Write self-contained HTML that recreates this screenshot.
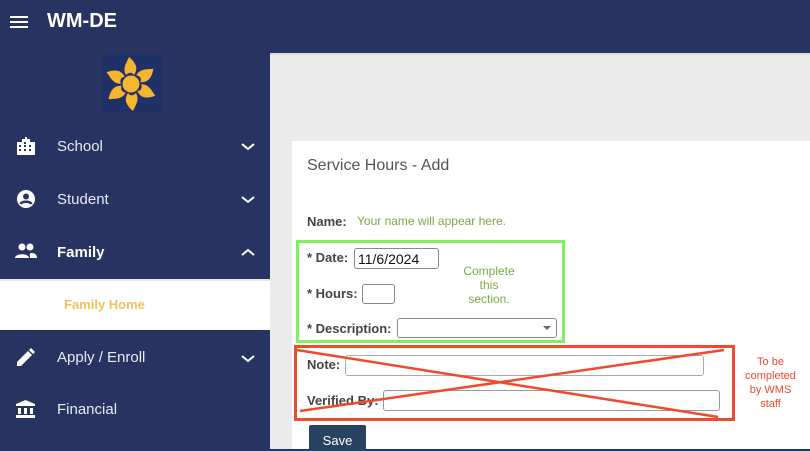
<!DOCTYPE html>
<html><head><meta charset="utf-8"><style>
*{margin:0;padding:0;box-sizing:border-box}
body{width:810px;height:449px;overflow:hidden;background:#273461;font-family:"Liberation Sans",sans-serif;position:relative}
.abs{position:absolute}
.hdr{left:0;top:0;width:810px;height:53px;background:#273461}
.main{left:270px;top:53px;width:540px;height:396px;background:#ebebeb;border-top:2px solid #d9dbe2}
.card{left:292px;top:141px;width:518px;height:308px;background:#fff}
.mi{color:#e9ebf2;font-size:15px}
.lbl{font-weight:bold;color:#444;font-size:13px}
.inp{border:1px solid #888;border-radius:3px;background:#fff}
</style></head><body>
<div class="abs hdr"></div>
<div class="abs" style="left:10px;top:16px;width:18px;height:2px;background:#fff;box-shadow:0 5px 0 #fff,0 10px 0 #fff"></div>
<div class="abs" style="left:47px;top:10px;color:#fff;font-weight:bold;font-size:20px">WM-DE</div>
<svg class="abs" style="left:102px;top:54px" width="60" height="58" viewBox="0 0 60 58">
<rect width="60" height="58" fill="#1f3166"/>
<g fill="#f6b531" transform="translate(29,30)">
<circle r="8.5"/>
<g id="p"><path d="M-5,-9 C-9,-16 -4,-22 -2,-27 C4,-22 8,-16 3,-9 C1,-12 -2,-12 -5,-9Z"/></g>
<use href="#p" transform="rotate(60)"/><use href="#p" transform="rotate(120)"/><use href="#p" transform="rotate(180)"/><use href="#p" transform="rotate(240)"/><use href="#p" transform="rotate(300)"/>
</g></svg>
<svg class="abs" style="left:17px;top:137px" width="18" height="18" viewBox="0 0 18 18" fill="#fff"><path d="M0 18V5h5V2h3V0h2v2h3v3h5v13zM2 8h2v2H2zm0 4h2v2H2zm5-7h2v2H7zm0 3h2v2H7zm0 4h2v2H7zm5-4h2v2h-2zm0 4h2v2h-2z" fill-rule="evenodd"/></svg>
<div class="abs mi" style="left:57px;top:138px">School</div>
<svg class="abs" style="left:17px;top:190px" width="18" height="18" viewBox="0 0 18 18"><circle cx="9" cy="9" r="9" fill="#fff"/><circle cx="9" cy="6.5" r="3" fill="#273461"/><path d="M3.5 14c1.5-3 9.5-3 11 0" stroke="#273461" stroke-width="2.5" fill="none"/></svg>
<div class="abs mi" style="left:57px;top:191px">Student</div>
<svg class="abs" style="left:15px;top:243px" width="22" height="16" viewBox="0 0 22 16" fill="#fff"><circle cx="7" cy="4" r="3.5"/><circle cx="15" cy="4" r="3.5"/><path d="M0 15c0-5 14-5 14 0zM15 15c0-3-1-5 2-5s5 2 5 5z"/></svg>
<div class="abs mi" style="left:57px;top:244px;font-weight:bold;color:#fff">Family</div>
<div class="abs" style="left:0;top:279px;width:270px;height:51px;background:#fff;border-top:2px solid #e6e8ee"></div>
<div class="abs" style="left:64px;top:297px;color:#f2c15a;font-weight:bold;font-size:13px">Family Home</div>
<svg class="abs" style="left:17px;top:348px" width="18" height="18" viewBox="0 0 18 18" fill="#fff"><path d="M0 14v4h4L15 7l-4-4zM12 2l2-2 4 4-2 2z"/></svg>
<div class="abs mi" style="left:57px;top:349px">Apply / Enroll</div>
<svg class="abs" style="left:16px;top:400px" width="19" height="18" viewBox="0 0 19 18" fill="#fff"><path d="M9.5 0L0 4v2h19V4zM2 8h3v6H2zm6 0h3v6H8zm6 0h3v6h-3zM0 15h19v3H0z"/></svg>
<div class="abs mi" style="left:57px;top:401px">Financial</div>
<svg class="abs" style="left:240px;top:139px" width="16" height="280" fill="none" stroke="#fff" stroke-width="2">
<path d="M2 5l6 5 6-5"/><path d="M2 58l6 5 6-5"/><path d="M2 116l6-5 6 5"/><path d="M2 217l6 5 6-5"/></svg>
<div class="abs main"></div>
<div class="abs card"></div>
<div class="abs" style="left:307px;top:157px;font-size:16px;color:#555">Service Hours - Add</div>
<div class="abs lbl" style="left:307px;top:214px">Name:</div>
<div class="abs" style="left:357px;top:214px;font-size:12px;color:#7aaa44">Your name will appear here.</div>
<div class="abs" style="left:296px;top:240px;width:269px;height:103px;border:3px solid #80f060"></div>
<div class="abs lbl" style="left:307px;top:250px">* Date:</div>
<div class="abs inp" style="left:354px;top:248px;width:85px;height:21px;font-size:14px;color:#111;padding:2px 3px">11/6/2024</div>
<div class="abs" style="left:459px;top:264px;width:60px;text-align:center;font-size:12px;color:#7aaa44;line-height:14px">Complete<br>this<br>section.</div>
<div class="abs lbl" style="left:307px;top:286px">* Hours:</div>
<div class="abs inp" style="left:362px;top:284px;width:33px;height:20px"></div>
<div class="abs lbl" style="left:307px;top:321px">* Description:</div>
<div class="abs inp" style="left:397px;top:318px;width:160px;height:20px"></div>
<div class="abs" style="left:543px;top:326px;border:4px solid transparent;border-top:4px solid #666"></div>
<div class="abs" style="left:294px;top:345px;width:441px;height:76px;border:3px solid #f04a2e"></div>
<div class="abs lbl" style="left:307px;top:357px">Note:</div>
<div class="abs inp" style="left:345px;top:355px;width:359px;height:21px;border-color:#aaa"></div>
<div class="abs lbl" style="left:307px;top:393px">Verified By:</div>
<div class="abs inp" style="left:383px;top:390px;width:337px;height:21px;border-color:#999"></div>
<svg class="abs" style="left:0;top:0" width="810" height="449"><path d="M297 350L718 417M300 411L724 350" stroke="#f04a2e" stroke-width="2.5"/></svg>
<div class="abs" style="left:738px;top:355px;width:65px;text-align:center;font-size:11px;color:#f04a2e;line-height:14px">To be<br>completed<br>by WMS<br>staff</div>
<div class="abs" style="left:309px;top:425px;width:57px;height:26px;background:#28435f;border-radius:2px;color:#fff;font-size:13px;text-align:center;padding-top:8px">Save</div>
</body></html>
